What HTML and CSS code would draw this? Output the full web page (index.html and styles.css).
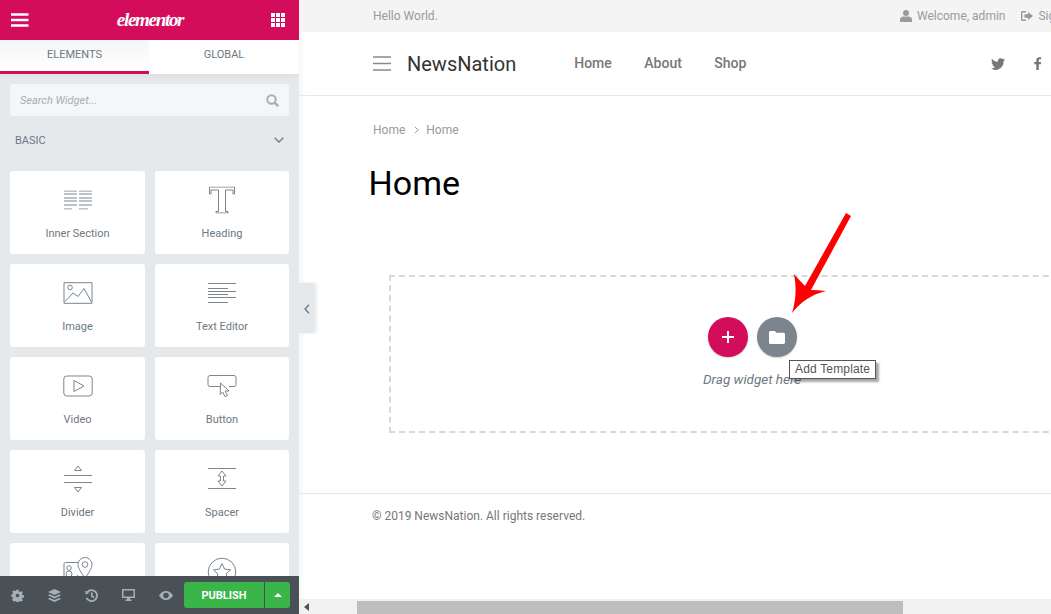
FILE: index.html
```html
<!DOCTYPE html>
<html lang="en">
<head>
<meta charset="utf-8">
<title>Elementor</title>
<link rel="stylesheet" href="styles.css">
</head>
<body>
<div class="app">
  <aside class="panel">
    <header class="brand">
      <svg class="ic-menu" width="18" height="14" viewBox="0 0 18 14"><path d="M0 1.500h17.500M0 7h17.500M0 12.500h17.500" stroke="#fff" stroke-width="2.400"/></svg>
      <span class="logo">elementor</span>
      <svg class="ic-grid" width="14" height="14" viewBox="0 0 14 14" fill="#fff"><path d="M0 0h4v4H0zM5 0h4v4H5zM10 0h4v4h-4zM0 5h4v4H0zM5 5h4v4H5zM10 5h4v4h-4zM0 10h4v4H0zM5 10h4v4H5zM10 10h4v4h-4z"/></svg>
    </header>
    <nav class="tabs">
      <div class="tab tab-on">ELEMENTS</div>
      <div class="tab">GLOBAL</div>
    </nav>
    <div class="search">
      <span>Search Widget...</span>
      <svg width="13" height="13" viewBox="0 0 13 13" fill="none" stroke="#a4afb7" stroke-width="2"><circle cx="5.500" cy="5.500" r="4.200"/><path d="M8.600 8.600l3.600 3.600" stroke-width="2.400"/></svg>
    </div>
    <div class="cat">
      <span>BASIC</span>
      <svg width="10" height="6" viewBox="0 0 10 6" fill="none" stroke="#6d7882" stroke-width="1.300"><path d="M.7.8L5 5l4.300-4.200"/></svg>
    </div>
    <div class="widgets">
      <div class="widget">
        <svg width="30" height="19" viewBox="0 0 30 19"><path d="M1 .5h13M16 .5h13M1 3.500h13M16 3.500h13M1 7.500h13M16 7.500h13M1 10.500h13M16 10.500h13M1 14.500h13M16 14.500h13M1 18.500h8M16 18.500h9"/></svg>
        <span>Inner Section</span>
      </div>
      <div class="widget">
        <svg width="26" height="27" viewBox="0 0 26 27"><path d="M.5.500H25.500V7.500H24V3.500H16.500V25H19V26.500H7V25H9.500V3.500H2V7.500H.5z"/></svg>
        <span>Heading</span>
      </div>
      <div class="widget">
        <svg width="30" height="22" viewBox="0 0 30 22"><path d="M1 .7h28v20.600H1z"/><circle cx="7" cy="5.500" r="2.300"/><path d="M1.500 20l8.500-9 5 3.500 6-8 7.500 13.500"/></svg>
        <span>Image</span>
      </div>
      <div class="widget">
        <svg width="30" height="20" viewBox="0 0 30 20"><path d="M1 .5h28M1 5.500h20M1 8.500h28M1 11.500h20M1 14.500h28M1 19.500h20"/></svg>
        <span>Text Editor</span>
      </div>
      <div class="widget">
        <svg width="30" height="22" viewBox="0 0 30 22"><rect x=".8" y="1" width="28.400" height="20" rx="3"/><path d="M11 5.500l10 5.500-10 5.500z"/></svg>
        <span>Video</span>
      </div>
      <div class="widget">
        <svg width="30" height="22" viewBox="0 0 30 22"><path d="M13 11.500H3a2 2 0 0 1-2-2V2.500a2 2 0 0 1 2-2h24a2 2 0 0 1 2 2v7a2 2 0 0 1-2 2h-5"/><path d="M13.500 8l8.500 8h-4l2.500 4.500-2.500 1.200-2.300-4.700-2.500 2.500z"/></svg>
        <span>Button</span>
      </div>
      <div class="widget">
        <svg width="30" height="28" viewBox="0 0 30 28"><path d="M15 1l3.500 4.500h-7zM1 10.500h28M1 17.500h28M11.500 22.500h7L15 27z"/></svg>
        <span>Divider</span>
      </div>
      <div class="widget">
        <svg width="30" height="22" viewBox="0 0 30 22"><path d="M1 .5h28M1 20.500h28M15 3l4 5h-2.500v5H19l-4 5-4-5h2.500V8H11z"/></svg>
        <span>Spacer</span>
      </div>
      <div class="widget">
        <svg width="30" height="30" viewBox="0 0 30 30"><path d="M15 5.500H2.500A1.500 1.500 0 0 0 1 7v20h14M15 18l-7 10"/><circle cx="6" cy="11" r="2.300"/><circle cx="6" cy="17" r="3"/><path d="M22 .5a7 7 0 0 1 7 7c0 4-4 9-7 14-3-5-7-10-7-14a7 7 0 0 1 7-7z"/><circle cx="22" cy="7.500" r="2.800"/></svg>
      </div>
      <div class="widget">
        <svg width="30" height="30" viewBox="0 0 30 30"><circle cx="15" cy="15" r="13.800"/><path d="M15 6.500l2.600 5.600 6 .7-4.500 4 1.300 6L15 20l-5.400 2.800 1.300-6-4.500-4 6-.7z"/></svg>
      </div>
    </div>
    <footer class="tools">
      <svg width="13" height="13" viewBox="-1 -1 15 15" fill="#a4afb7"><path fill-rule="evenodd" d="M5.200 0h2.600l.3 1.800 1.300.6 1.500-1 1.800 1.800-1 1.500.6 1.300 1.700.3v2.600l-1.700.3-.6 1.300 1 1.500-1.800 1.800-1.500-1-1.300.6-.3 1.700H5.200l-.3-1.700-1.300-.6-1.500 1L.3 11l1-1.500-.6-1.300L-.7 7.900V5.300l1.400-.3.600-1.300-1-1.500L2.100.4l1.500 1 1.300-.6zM6.500 4.400a2.100 2.100 0 1 0 0 4.200 2.100 2.100 0 0 0 0-4.200z"/></svg>
      <svg width="13" height="13" viewBox="0 0 13 13" fill="#a4afb7"><path d="M6.500 0L13 3 6.500 6 0 3zM1.500 5.300l5 2.300 5-2.300L13 6.500 6.500 9.500 0 6.500zM1.500 8.800l5 2.300 5-2.300L13 10 6.500 13 0 10z"/></svg>
      <svg width="13" height="13" viewBox="0 0 13 13" fill="none" stroke="#a4afb7" stroke-width="1.800"><path d="M2.300 3A5.500 5.500 0 1 1 1.500 8.800M6.800 3.500V7l2.300 1.500"/><path d="M0 1.500L.7 5.500 4.500 4z" fill="#a4afb7" stroke="none"/></svg>
      <svg width="13" height="12" viewBox="0 0 13 12" fill="#a4afb7"><path fill-rule="evenodd" d="M0 0h13v9H8v1.500h1.500V12h-6v-1.500H5V9H0zM1.500 1.500v6h10v-6z"/></svg>
      <svg width="14" height="9" viewBox="0 0 14 9" fill="#a4afb7"><path fill-rule="evenodd" d="M7 0c3 0 5.500 2 7 4.500C12.500 7 10 9 7 9S1.500 7 0 4.500C1.500 2 4 0 7 0zm0 1.700a2.800 2.800 0 1 0 0 5.600 2.800 2.800 0 0 0 0-5.600z"/></svg>
      <div class="publish">
        <span class="pub-main">PUBLISH</span>
        <span class="pub-more"><i class="caret"></i></span>
      </div>
    </footer>
  </aside>
  <main class="site">
    <button class="toggle" aria-label="Collapse">
      <svg width="6" height="10" viewBox="0 0 6 10" fill="none" stroke="#6d7882" stroke-width="1.300"><path d="M5 .8L1 5l4 4.200"/></svg>
    </button>
    <div class="frame">
      <div class="topbar">
        <span>Hello World.</span>
        <div class="top-right">
          <span class="top-item">
            <svg width="12" height="12" viewBox="0 0 12 12" fill="#9a9a9a"><circle cx="6" cy="3" r="3"/><path d="M0 12V9.500C0 7.500 2 6.500 3.500 6.500h5C10 6.500 12 7.500 12 9.500V12z"/></svg>
            Welcome, admin
          </span>
          <span class="top-item">
            <svg width="12" height="10" viewBox="0 0 12 10" fill="#9a9a9a"><path d="M5 0H1.500C.5 0 0 .6 0 1.500v7C0 9.400.5 10 1.500 10H5V8.600H1.400V1.400H5z"/><path d="M7 1l5 4-5 4V6.800H3.500V3.200H7z"/></svg>
            Sign out
          </span>
        </div>
      </div>
      <div class="header">
        <svg class="burger" width="18" height="15" viewBox="0 0 18 15" stroke="#8a8a8a" stroke-width="1.600"><path d="M0 1h18M0 7.500h18M0 14h18"/></svg>
        <span class="site-name">NewsNation</span>
        <nav class="nav"><span>Home</span><span>About</span><span>Shop</span></nav>
        <div class="social">
          <svg width="14" height="12" viewBox="0 0 24 20" fill="#777"><path d="M24 2.400c-.9.400-1.800.7-2.800.8 1-.6 1.800-1.600 2.200-2.700-1 .6-2 1-3.100 1.200A4.900 4.900 0 0 0 11.900 6.200C7.800 6 4.200 4 1.700.9.400 3.200 1 6.100 3.200 7.500c-.8 0-1.600-.2-2.200-.6 0 2.300 1.600 4.400 3.900 4.900-.7.200-1.500.2-2.200.1.600 2 2.400 3.400 4.600 3.400A9.900 9.900 0 0 1 0 17.800 14 14 0 0 0 21.500 5.400c1-.7 1.800-1.600 2.500-3z"/></svg>
          <svg width="8" height="13" viewBox="0 0 8 13" fill="#777"><path d="M2.300 13V7.200H.3V5h2V3.300C2.300 1.300 3.500.2 5.300.2c.9 0 1.600.1 1.900.1v2H6c-1 0-1.200.5-1.200 1.200V5h2.300l-.3 2.200h-2V13z"/></svg>
        </div>
      </div>
      <div class="crumbs"><span>Home</span><svg width="5" height="8" viewBox="0 0 5 8" fill="none" stroke="#999"><path d="M.8.8L4.200 4 .8 7.200"/></svg><span>Home</span></div>
      <h1 class="title">Home</h1>
      <div class="drop">
        <div class="drop-btns">
          <span class="round round-add"><svg width="12" height="12" viewBox="0 0 12 12" stroke="#fff" stroke-width="2"><path d="M6 0v12M0 6h12"/></svg></span>
          <span class="round round-tpl"><svg width="16" height="13" viewBox="0 0 16 13" fill="#fff"><path d="M1.500 0h4.300l1.500 1.800h7.200c.8 0 1.500.7 1.500 1.500v8.200c0 .8-.7 1.500-1.500 1.500h-13C.7 13 0 12.300 0 11.500v-10C0 .7.700 0 1.500 0z"/></svg></span>
          <span class="tooltip">Add Template</span>
        </div>
        <div class="drop-text">Drag widget here</div>
      </div>
      <div class="footer">© 2019 NewsNation. All rights reserved.</div>
    </div>
    <svg class="arrow" width="64" height="104" viewBox="0 0 64 104"><path d="M58 1L63 4L23 78Q30 78 38 79Q17 84 4 101Q10 82 6 62Q11 68 17 74z" fill="#fe0000"/></svg>
    <div class="hscroll">
      <span class="hs-btn"></span>
      <span class="hs-thumb"></span>
    </div>
  </main>
</div>
</body>
</html>
```
FILE: styles.css
```css
* { box-sizing: border-box; }
html, body { margin: 0; height: 100%; overflow: hidden; background: #fff; }
body { font-family: Roboto, "Liberation Sans", sans-serif; }
.app { display: flex; width: 1051px; height: 614px; }

.panel { position: relative; width: 299px; height: 614px; flex: none; background: #e6e9ec; overflow: hidden; }
.brand { height: 40px; background: #d30c5c; display: flex; align-items: center; justify-content: space-between; padding: 0 14px 0 11px; }
.logo { font-family: "Liberation Serif", serif; font-style: italic; font-weight: 700; font-size: 19px; letter-spacing: -1.3px; color: #fff; }
.tabs { display: flex; height: 34px; box-shadow: 0 2px 6px rgba(0,0,0,.05); }
.tab { flex: 1; display: flex; align-items: center; justify-content: center; background: #fff; font-size: 11px; color: #6d7882; padding-bottom: 5px; }
.tab-on { flex: none; width: 149px; background: linear-gradient(#f4f5f6, #fff); border-bottom: 3px solid #d30c5c; padding-bottom: 2px; }
.search { margin: 10px 10px 0; height: 32px; border-radius: 3px; background: #f5f6f7; display: flex; align-items: center; justify-content: space-between; padding: 0 10px; font-size: 11px; font-style: italic; color: #a4afb7; }
.cat { display: flex; justify-content: space-between; align-items: center; height: 14px; margin: 17px 15px 0; font-size: 11px; color: #6d7882; }
.widgets { display: grid; grid-template-columns: 135px 134px; gap: 10px; grid-auto-rows: 83px; margin: 24px 0 0 10px; }
.widget { background: #fff; border-radius: 3px; position: relative; font-size: 11px; color: #6d7882; }
.widget svg { position: absolute; left: 50%; top: 29px; transform: translate(-50%, -50%); fill: none; stroke: #7a858e; stroke-width: 1; }
.widget span { position: absolute; top: 56px; width: 100%; text-align: center; }

.tools { position: absolute; left: 0; bottom: 0; width: 299px; height: 38px; background: #495157; display: flex; align-items: center; padding: 0 9px 0 11px; }
.tools > svg { flex: none; }
.tools > svg + svg { margin-left: 24px; }
.publish { display: flex; height: 26px; flex: none; margin-left: auto; border-radius: 3px; overflow: hidden; color: #fff; }
.pub-main { width: 80px; background: #39b54a; display: flex; align-items: center; justify-content: center; font-size: 11px; font-weight: 700; }
.pub-more { width: 25px; margin-left: 1px; background: #39b54a; display: flex; align-items: center; justify-content: center; }
.caret { width: 0; height: 0; border: 4px solid transparent; border-top: 0; border-bottom: 4px solid #fff; }

.site { position: relative; flex: 1; min-width: 0; height: 614px; overflow: hidden; box-shadow: inset 8px 0 6px -6px rgba(0,0,0,.05); }
.toggle { position: absolute; left: 0; top: 283px; width: 16px; height: 50px; border: 0; padding: 1px 0 0; background: #e6e9ec; display: flex; align-items: center; justify-content: center; z-index: 2; box-shadow: 2px 0 3px rgba(0,0,0,.08); }
.frame { width: 752px; }
.topbar { height: 32px; background: #f4f4f4; padding: 0 0 0 74px; display: flex; align-items: center; justify-content: space-between; font-size: 12px; color: #9a9a9a; white-space: nowrap; }
.top-right { display: flex; width: 151px; flex: none; overflow: hidden; gap: 16px; }
.top-item { display: inline-flex; align-items: center; gap: 5px; flex: none; }
.header { height: 64px; border-bottom: 1px solid #e8e8e8; display: flex; align-items: center; padding-left: 74px; }
.burger { flex: none; }
.site-name { margin-left: 16px; font-size: 20px; color: #333; }
.nav { display: flex; gap: 32.5px; margin-left: 58px; font-size: 14px; font-weight: 500; color: #777; margin-top: -2px; }
.social { margin-left: auto; width: 60px; flex: none; display: flex; align-items: center; gap: 29px; }
.crumbs { display: flex; align-items: center; gap: 7px; margin: 27px 0 0 74px; font-size: 12px; line-height: 14px; color: #999; }
.crumbs svg { margin-left: 2px; }
.title { margin: 26px 0 0 69.5px; font-size: 34px; line-height: 40px; font-weight: 400; color: #000; }
.drop { margin: 72px 0 0 90px; width: 700px; height: 158px; border: 2px dashed #d5d8dc; padding-top: 40px; position: relative; }
.drop-btns { display: flex; gap: 9px; margin-left: 317px; position: relative; }
.round { width: 40px; height: 40px; border-radius: 50%; display: flex; align-items: center; justify-content: center; box-shadow: 0 1px 2px rgba(0,0,0,.2); }
.round-add { background: #d30c5c; }
.round-tpl { background: #7c848e; }
.tooltip { position: absolute; left: 81px; top: 43px; height: 19px; padding: 0 5px; background: #fff; border: 1px solid #555; box-shadow: 3px 3px 2px rgba(0,0,0,.35); font-family: "Liberation Sans", Roboto, sans-serif; font-size: 12px; letter-spacing: .17px; line-height: 17px; color: #555; white-space: nowrap; z-index: 1; }
.drop-text { margin: 14px 0 0 312px; font-size: 13.5px; font-style: italic; color: #6d7882; }
.footer { margin-top: 60px; border-top: 1px solid #e8e8e8; padding: 15px 0 0 73px; font-size: 12px; line-height: 14px; color: #777; }
.arrow { position: absolute; left: 489px; top: 212px; z-index: 2; }
.hscroll { position: absolute; left: 0; right: 0; bottom: 0; height: 15px; background: #f1f1f1; display: flex; align-items: center; }
.hs-btn { width: 0; height: 0; margin-left: 5px; border: 4px solid transparent; border-left: 0; border-right: 5px solid #505050; }
.hs-thumb { position: absolute; left: 58px; width: 546px; top: 2px; bottom: 0; background: #bdbdbd; }
```
